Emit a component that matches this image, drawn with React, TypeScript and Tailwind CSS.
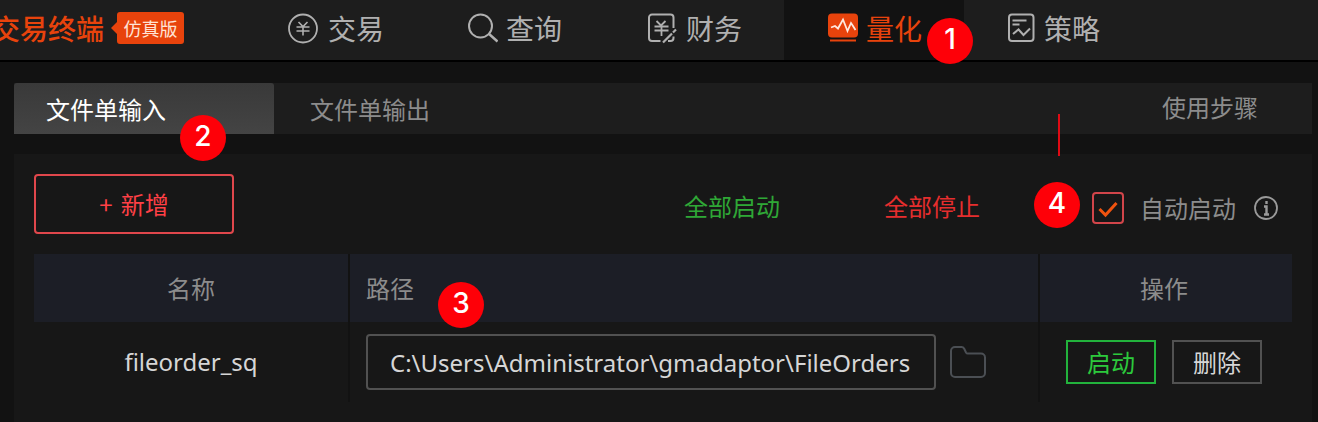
import type { ReactNode } from 'react';

function TradeIcon() {
  return (
    <svg viewBox="0 0 32 32" className="size-8 shrink-0" fill="none" stroke="currentColor" strokeWidth="1.8" aria-hidden="true">
      <circle cx="15" cy="16.500" r="14" />
      <path d="M10.500 10l4.500 4.500 4.500-4.500M8.500 15h13M8.500 19h13M15 14.500v9" strokeWidth="1.6" />
    </svg>
  );
}

function SearchIcon() {
  return (
    <svg viewBox="0 0 30 32" className="h-8 w-[30px] shrink-0" fill="none" stroke="currentColor" strokeWidth="2" aria-hidden="true">
      <circle cx="12.500" cy="14" r="11.5" />
      <path d="M20.500 21.500l9 8" strokeWidth="2.4" />
    </svg>
  );
}

function FinanceIcon() {
  return (
    <svg viewBox="0 0 30 32" className="h-8 w-[30px] shrink-0" fill="none" stroke="currentColor" strokeWidth="2" aria-hidden="true">
      <path d="M25.500 16V5.500a3 3 0 0 0-3-3H4a3 3 0 0 0-3 3v20.500a3 3 0 0 0 3 3h8.500" />
      <path d="M8.500 9l4.500 4.500 4.500-4.500M6.500 14.500h14M6.500 18.500h14M13.500 14v10" strokeWidth="1.8" />
      <path d="M15 30.500l9-9M25 20.500l3-3" strokeWidth="2.200" />
      <path d="M20 29h2.500c2 0 3-1 3-3v-1.500" />
    </svg>
  );
}

function QuantIcon() {
  return (
    <svg viewBox="0 0 30 32" className="h-8 w-[30px] shrink-0" fill="none" aria-hidden="true">
      <rect x="0" y="1.500" width="30" height="24" rx="4" fill="#e8430c" />
      <path d="M2 28.500h26" stroke="#e8430c" strokeWidth="2" />
      <path d="M3 15.500l4-1.500 3 2.500 5-9 4.500 11.500 3.500-8 2 3 2.500 4" stroke="#ffe9df" strokeWidth="1.800" />
    </svg>
  );
}

function StrategyIcon() {
  return (
    <svg viewBox="0 0 28 32" className="h-8 w-7 shrink-0" fill="none" stroke="currentColor" strokeWidth="2" aria-hidden="true">
      <rect x="1" y="2.500" width="24.500" height="26.500" rx="3" />
      <path d="M4.500 8.500h14M4.500 12.500h7M5 22l5.500-4.500 5 5.500 6.500-6.500" />
    </svg>
  );
}

function FolderIcon() {
  return (
    <svg viewBox="0 0 36 32" className="h-8 w-9" fill="none" stroke="#4b4f54" strokeWidth="2" aria-hidden="true">
      <path d="M1 5a4 4 0 0 1 4-4h6.500c1.200 0 2 .5 2.600 1.500L16 6.500c.4.700 1 1 1.800 1H31a4 4 0 0 1 4 4V27a4 4 0 0 1-4 4H5a4 4 0 0 1-4-4z" />
    </svg>
  );
}

function InfoIcon() {
  return (
    <svg viewBox="0 0 24 24" className="size-6" fill="none" stroke="#9a9a9a" aria-hidden="true">
      <circle cx="12" cy="12" r="11" strokeWidth="1.800" />
      <path d="M12.500 5v3M10 10.500h2.500V18M10 18.500h5" strokeWidth="2.400" />
    </svg>
  );
}

function Step({ n, className }: { n: number; className: string }) {
  return (
    <span
      className={`pointer-events-none absolute z-10 flex size-[46px] items-center justify-center rounded-full bg-[#fe0008] pb-1 font-['Inter',sans-serif] text-[28px] leading-none font-medium text-white ${className}`}
    >
      {n}
    </span>
  );
}

const navItems: { label: string; icon: ReactNode; active?: boolean }[] = [
  { label: '交易', icon: <TradeIcon /> },
  { label: '查询', icon: <SearchIcon /> },
  { label: '财务', icon: <FinanceIcon /> },
  { label: '量化', icon: <QuantIcon />, active: true },
  { label: '策略', icon: <StrategyIcon /> },
];

function Header() {
  return (
    <header className="flex h-[62px] border-b-2 border-black bg-[#1d1d1d]">
      <div className="flex w-[244px] shrink-0 items-center pb-1">
        <span className="-ml-2 shrink-0 text-[28px] leading-8 font-medium text-[#e8430c]">交易终端</span>
        <svg viewBox="0 0 6 12" className="ml-[7px] h-3 w-[6px] shrink-0" aria-hidden="true">
          <path d="M6 0v12L0 6z" fill="#e8430c" />
        </svg>
        <span className="flex h-8 w-[67px] shrink-0 items-center justify-center rounded-[3px] bg-[#e8430c] text-lg leading-none text-[#ffe3d6]">
          仿真版
        </span>
      </div>
      <nav className="flex">
        {navItems.map((item) => (
          <a
            key={item.label}
            href="#"
            className={`relative flex w-[180px] items-center gap-2 pb-1 pl-11 text-[28px] leading-8 ${
              item.active ? 'bg-[#121212] text-[#e8430c]' : 'text-[#b0b0b0]'
            }`}
          >
            {item.icon}
            <span>{item.label}</span>
            {item.active && <Step n={1} className="top-[18px] right-[-9px]" />}
          </a>
        ))}
      </nav>
    </header>
  );
}

function Tabs() {
  return (
    <div className="flex bg-[#1d1d1d] text-2xl leading-[51px] text-[#8c8c8c]">
      <button
        type="button"
        className="relative w-[260px] rounded-t-[3px] bg-linear-to-b from-[#393939] to-[#444444] pl-8 text-left text-white"
      >
        文件单输入
        <Step n={2} className="top-8 left-[166px]" />
      </button>
      <button type="button" className="pl-9 text-left">
        文件单输出
      </button>
      <a href="#" className="mr-[54px] ml-auto leading-[48px]">
        使用步骤
      </a>
    </div>
  );
}

function Toolbar() {
  return (
    <div className="flex items-center">
      <button
        type="button"
        className="flex h-[60px] w-[200px] items-center justify-center gap-2 rounded-[4px] border-2 border-[#e0474c] text-2xl text-[#ff4046]"
      >
        <span>+</span>
        <span>新增</span>
      </button>
      <div className="ml-auto flex items-center pt-1 pr-[14px] text-2xl leading-8">
        <button type="button" className="mr-[104px] text-[#2fa836]">
          全部启动
        </button>
        <button type="button" className="mr-28 text-[#e62e2e]">
          全部停止
        </button>
        <div className="relative flex items-center pt-1">
          <span className="pointer-events-none absolute bottom-[68px] left-[-34px] h-[42px] w-[2px] bg-[#e00a14]" />
          <Step n={4} className="bottom-[-4px] left-[-58px]" />
          <span className="relative size-8">
            <input
              id="auto-start"
              type="checkbox"
              defaultChecked
              className="peer block size-8 appearance-none rounded-[4px] border-2 border-[#d2454a]"
            />
            <svg
              viewBox="0 0 32 32"
              className="pointer-events-none invisible absolute inset-0 size-8 peer-checked:visible"
              fill="none"
              stroke="#f0530f"
              strokeWidth="3"
              aria-hidden="true"
            >
              <path d="M7.500 17l6 6L24.500 11" />
            </svg>
          </span>
          <label htmlFor="auto-start" className="ml-4 text-[#8c8c8c]">
            自动启动
          </label>
          <button type="button" aria-label="说明" className="ml-[18px]">
            <InfoIcon />
          </button>
        </div>
      </div>
    </div>
  );
}

function OrderTable() {
  return (
    <table className="mt-5 w-full table-fixed border-collapse text-2xl">
      <thead>
        <tr className="h-[68px] bg-[#1c1e26] text-[#8c8c8c]">
          <th scope="col" className="w-[315px] border-r-2 border-[#121212] p-0 text-center font-normal">
            名称
          </th>
          <th scope="col" className="relative border-r-2 border-[#121212] py-0 pr-0 pl-4 text-left font-normal">
            路径
            <Step n={3} className="top-7 left-[88px]" />
          </th>
          <th scope="col" className="w-[253px] p-0 pr-1 text-center font-normal">
            操作
          </th>
        </tr>
      </thead>
      <tbody>
        <tr className="h-20">
          <td className="border-r-2 border-[#121212] p-0 text-center font-['Noto_Sans',sans-serif] text-[#d6d6d6]">
            fileorder_sq
          </td>
          <td className="border-r-2 border-[#121212] py-0 pl-4">
            <div className="flex items-center gap-[14px] pr-[52px]">
              <input
                type="text"
                aria-label="路径"
                defaultValue={'C:\\Users\\Administrator\\gmadaptor\\FileOrders'}
                className="h-14 min-w-0 flex-1 rounded-[4px] border-2 border-[#515151] bg-transparent px-[22px] font-['Noto_Sans',sans-serif] text-[#d6d6d6]"
              />
              <button type="button" aria-label="选择文件夹">
                <FolderIcon />
              </button>
            </div>
          </td>
          <td className="p-0">
            <div className="flex justify-center gap-4 pr-1">
              <button type="button" className="h-11 w-[90px] border-2 border-[#22b33c] text-[#2cc93c]">
                启动
              </button>
              <button type="button" className="h-11 w-[90px] border-2 border-[#515151] text-[#d6d6d6]">
                删除
              </button>
            </div>
          </td>
        </tr>
      </tbody>
    </table>
  );
}

export default function App() {
  return (
    <div className="flex min-h-screen flex-col overflow-hidden bg-[#121212] font-['Noto_Sans_CJK_SC',sans-serif]">
      <Header />
      <main className="flex flex-1 flex-col gap-5 pt-[21px] pr-[6px] pl-[14px]">
        <Tabs />
        <section className="flex-1 bg-[#171717] px-5 pt-5 pb-5">
          <Toolbar />
          <OrderTable />
        </section>
      </main>
    </div>
  );
}
